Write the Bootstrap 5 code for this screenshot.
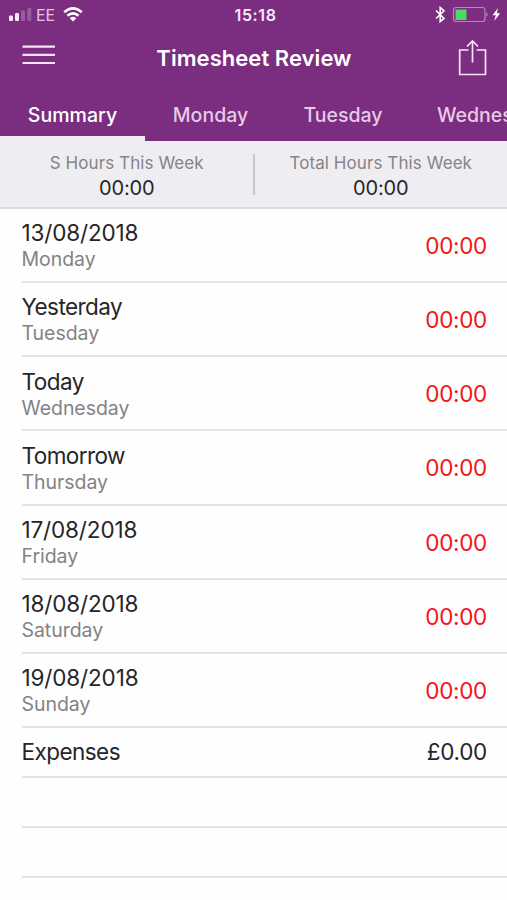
<!DOCTYPE html>
<html lang="en">
<head>
<meta charset="utf-8">
<meta name="viewport" content="width=device-width, initial-scale=1">
<title>Timesheet Review</title>
<link href="https://cdn.jsdelivr.net/npm/bootstrap@5.3.0/dist/css/bootstrap.min.css" rel="stylesheet">
<style>
body{font-family:Inter,"Liberation Sans",sans-serif;background:#fefefe;color:#262628;height:900px;overflow:hidden}
.top-area{background:#7b2d80;color:#fbeafb;height:141px}
.status-bar{height:30px;font-size:16px;line-height:30px}
.status-side{width:170px}
.status-time{font-weight:600;font-size:16px;letter-spacing:.6px;padding-left:4px}
.carrier{color:#e3c4e5}
.title-bar{height:60px}
.title-bar h1{font-size:22px;font-weight:600;line-height:30px;letter-spacing:.05px;color:#fff;margin:13px 0 0 1px}
.day-tabs{height:51px;font-size:19.5px;font-weight:500;line-height:30px}
.day-tabs .nav-link{color:#e6cbe8;padding:10px 0 0;text-align:center;flex:none;border-radius:0}
.day-tabs .nav-link.active{color:#fff;width:145px;border-bottom:5px solid #eeedf1;letter-spacing:.05px}
.day-tabs .tab-mon{width:131px}
.day-tabs .tab-tue{width:134px}
.day-tabs .tab-wed{padding-left:27px}
.totals{height:66.500px;background:#eeedf2;font-size:17px;line-height:24px}
.totals .caption{color:#858487;padding-top:10px;letter-spacing:.08px}
.totals .amount{font-size:20px;line-height:27px;letter-spacing:-.1px}
.totals .left-total{padding-left:1px}
.split{width:2px;height:41px;background:#c8c7cb;margin-top:13px}
.sheet{border-top:2px solid #dadadb;padding-left:22px;margin-top:-.5px}
.sheet .list-group-item{background:none;border:0;border-bottom:2px solid #e3e3e4;padding:0 20px 0 0;color:inherit}
.sheet .day-row{height:74.15px;padding-top:1.5px}
.plain-row{height:50px}
.day-name{font-size:22.5px;line-height:27px;letter-spacing:-.55px;margin-left:-.5px}
.day-date{letter-spacing:-.15px}
.day-sub{font-size:19.5px;line-height:26px;color:#838385;letter-spacing:-.05px;margin-left:-.5px}
.value{font-size:22.5px;letter-spacing:-.3px}
.red{color:#f2151b}
</style>
<script src="https://cdn.jsdelivr.net/npm/bootstrap@5.3.0/dist/js/bootstrap.bundle.min.js"></script>
</head>
<body>
<header class="top-area">
  <div class="status-bar d-flex justify-content-between">
    <div class="status-side d-flex align-items-center">
      <svg width="32" height="30" viewBox="0 0 32 30" fill="#fbeafb"><rect x="9" y="15.5" width="4" height="5.5" rx="1.2"/><rect x="15" y="13" width="4" height="8" rx="1.2"/><g opacity=".25"><rect x="21" y="10.500" width="4" height="10.500" rx="1.200"/><rect x="27.300" y="8" width="4" height="13" rx="1.200"/></g></svg>
      <span class="carrier ms-1">EE</span>
      <svg class="ms-2" width="20" height="30" viewBox="0 0 20 30" fill="none" stroke="#fff" stroke-width="2.600"><path d="M1.200 12.300Q10 4.600 18.800 12.300M4.400 15.700Q10 10.900 15.600 15.700"/><path d="M6.700 18.200Q10 15.500 13.300 18.200L10 21.500Z" fill="#fff" stroke="none"/></svg>
    </div>
    <div class="status-time">15:18</div>
    <div class="status-side d-flex justify-content-end">
      <svg width="72" height="30" viewBox="435 0 72 30" fill="none"><path d="M436 10.500L444 18.500L440.200 21.500V7.500L444 10.800L436 18.500" stroke="#fff" stroke-width="1.600"/><rect x="453.500" y="7.500" width="31.500" height="14" rx="2.500" stroke="#b987bd" stroke-width="1.200"/><rect x="455.500" y="9.500" width="11" height="10.500" fill="#4cd964"/><path d="M486.500 12.300q2 2.200 0 4.500Z" fill="#d6b3d8"/><path d="M498 8L492.500 15.200H495.800L494.200 21L500.200 13.300H496.800Z" fill="#fff"/></svg>
    </div>
  </div>
  <div class="title-bar d-flex justify-content-between">
    <svg width="70" height="50" viewBox="0 0 70 50" stroke="#f8e3f8" stroke-width="2.200"><path d="M22.500 16.700H55M22.500 24.800H55M22.500 33H55"/></svg>
    <h1>Timesheet Review</h1>
    <svg width="70" height="50" viewBox="437 30 70 50" fill="none" stroke="#f9e3f9" stroke-width="1.700"><path d="M468.500 50H459.700V74.500H485.500V50H476.500M472.500 62.500V41M467 46.500L472.500 41L478 46.500"/></svg>
  </div>
  <nav class="nav day-tabs flex-nowrap overflow-hidden">
    <a class="nav-link active" href="#">Summary</a>
    <a class="nav-link tab-mon" href="#">Monday</a>
    <a class="nav-link tab-tue" href="#">Tuesday</a>
    <a class="nav-link tab-wed" href="#">Wednesday</a>
  </nav>
</header>
<section class="totals d-flex text-center">
  <div class="flex-fill w-50 left-total"><div class="caption">S Hours This Week</div><div class="amount">00:00</div></div>
  <div class="split flex-shrink-0"></div>
  <div class="flex-fill w-50"><div class="caption">Total Hours This Week</div><div class="amount">00:00</div></div>
</section>
<main class="sheet">
  <ul class="list-group list-group-flush">
    <li class="list-group-item day-row d-flex justify-content-between align-items-center"><div><div class="day-name day-date">13/08/2018</div><div class="day-sub">Monday</div></div><span class="value red">00:00</span></li>
    <li class="list-group-item day-row d-flex justify-content-between align-items-center"><div><div class="day-name">Yesterday</div><div class="day-sub">Tuesday</div></div><span class="value red">00:00</span></li>
    <li class="list-group-item day-row d-flex justify-content-between align-items-center"><div><div class="day-name">Today</div><div class="day-sub">Wednesday</div></div><span class="value red">00:00</span></li>
    <li class="list-group-item day-row d-flex justify-content-between align-items-center"><div><div class="day-name">Tomorrow</div><div class="day-sub">Thursday</div></div><span class="value red">00:00</span></li>
    <li class="list-group-item day-row d-flex justify-content-between align-items-center"><div><div class="day-name day-date">17/08/2018</div><div class="day-sub">Friday</div></div><span class="value red">00:00</span></li>
    <li class="list-group-item day-row d-flex justify-content-between align-items-center"><div><div class="day-name day-date">18/08/2018</div><div class="day-sub">Saturday</div></div><span class="value red">00:00</span></li>
    <li class="list-group-item day-row d-flex justify-content-between align-items-center"><div><div class="day-name day-date">19/08/2018</div><div class="day-sub">Sunday</div></div><span class="value red">00:00</span></li>
    <li class="list-group-item plain-row d-flex justify-content-between align-items-center"><span class="day-name">Expenses</span><span class="value">£0.00</span></li>
    <li class="list-group-item plain-row"></li>
    <li class="list-group-item plain-row"></li>
    <li class="list-group-item plain-row"></li>
  </ul>
</main>
</body>
</html>
